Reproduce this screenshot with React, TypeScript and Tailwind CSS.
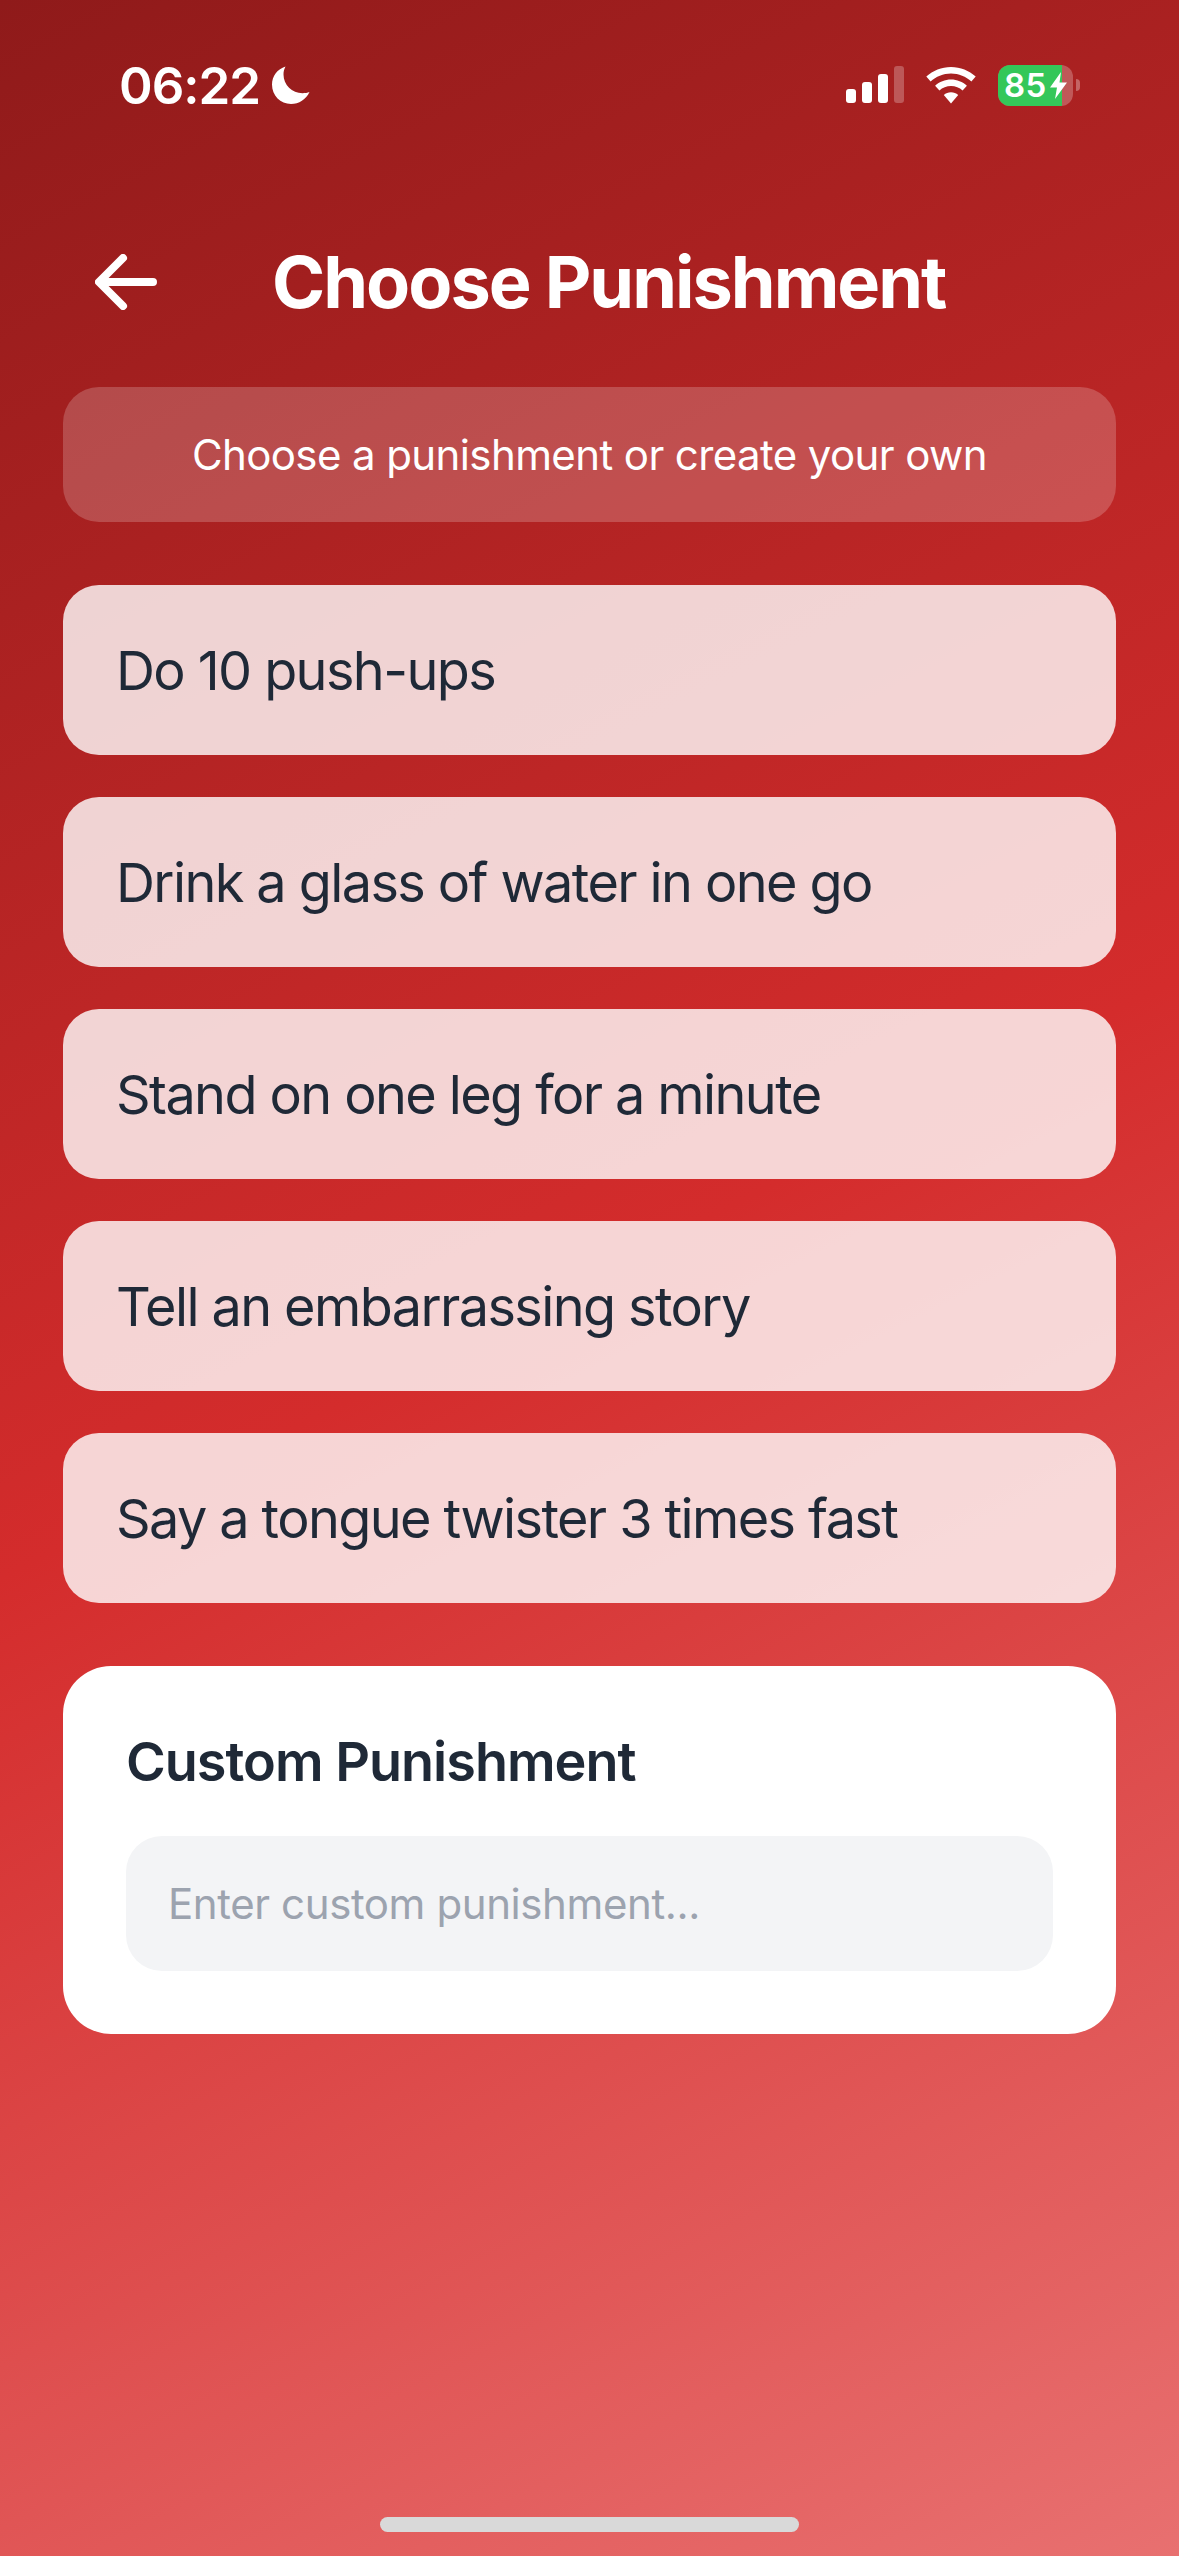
const FONT = "font-['Inter','Liberation_Sans',sans-serif]"

const punishments = [
  'Do 10 push-ups',
  'Drink a glass of water in one go',
  'Stand on one leg for a minute',
  'Tell an embarrassing story',
  'Say a tongue twister 3 times fast',
]

function MoonIcon() {
  return (
    <svg width="40" height="40" viewBox="0 0 40 40" fill="white">
      <path d="M14.5 1.5C6.5 4 1 11 1 19.5C1 30.5 9.5 39 20 39C28 39 35 34.5 38.5 27C36.5 27.8 34 28.2 31.5 28.2C21 28.2 12.5 20 12.5 9.5C12.5 6.5 13.2 4 14.5 1.5Z" />
    </svg>
  )
}

function SignalIcon() {
  return (
    <svg width="58" height="38" viewBox="0 0 58 38" fill="white">
      <rect x="0" y="23" width="10" height="14" rx="3" />
      <rect x="16" y="16" width="10" height="21" rx="3" />
      <rect x="32" y="8" width="10" height="29" rx="3" />
      <rect x="48" y="0" width="10" height="37" rx="3" fillOpacity="0.25" />
    </svg>
  )
}

function WifiIcon() {
  return (
    <svg width="50" height="37" viewBox="0 0 50 37" fill="white">
      <path d="M25 0C15.5 0 7 3.7 0.3 9.6L4.6 14.4C10 9.6 17.2 6.4 25 6.4C32.8 6.4 40 9.6 45.4 14.4L49.7 9.6C43 3.7 34.5 0 25 0Z" />
      <path d="M25 12.6C19 12.6 13.4 14.9 9.1 18.7L13.4 23.5C16.5 20.8 20.6 19.1 25 19.1C29.4 19.1 33.5 20.8 36.6 23.5L40.9 18.7C36.6 14.9 31 12.6 25 12.6Z" />
      <path d="M25 25.2C22.3 25.2 19.7 26.2 17.8 27.9L25 36.5L32.2 27.9C30.3 26.2 27.7 25.2 25 25.2Z" />
    </svg>
  )
}

function BatteryIcon() {
  return (
    <div className="flex items-center gap-[3px]">
      <div className="relative flex h-[41px] w-[75px] items-center overflow-hidden rounded-[12px] bg-white/25">
        <div className="absolute inset-y-0 left-0 w-[64px] bg-[#34c759]" />
        <span className="relative pl-[6px] text-[33px] font-semibold leading-none tracking-[0.5px] text-white">85</span>
        <svg className="absolute left-[52px] top-[7px]" width="17" height="27" viewBox="0 0 17 27" fill="white">
          <path d="M11 0L0 15.5H7L5 27L17 10.5H9.5L11 0Z" />
        </svg>
      </div>
      <div className="h-[12px] w-[4px] rounded-r-full bg-white/30" />
    </div>
  )
}

function StatusBar() {
  return (
    <div className="flex h-[60px] items-center justify-between pl-[56px] pr-[36px]">
      <div className="flex items-center gap-[11px]">
        <span className="text-[51px] font-semibold leading-none tracking-[-1px] text-white">06:22</span>
        <MoonIcon />
      </div>
      <div className="flex items-center gap-[22px]">
        <SignalIcon />
        <WifiIcon />
        <BatteryIcon />
      </div>
    </div>
  )
}

export default function App() {
  return (
    <div className={`${FONT} relative flex h-[2556px] w-[1179px] flex-col overflow-hidden bg-[linear-gradient(153deg,#8f1a1a_0%,#d42c2c_50%,#e87070_100%)] px-[63px] pt-[55px]`}>
      <StatusBar />

      <div className="mt-[122px] flex h-[90px] items-center">
        <svg className="ml-[32px]" width="62" height="56" viewBox="0 0 62 56" fill="none" stroke="white" strokeWidth="8" strokeLinecap="round" strokeLinejoin="round">
          <path d="M58 28H5M28 4L4 28L28 52" />
        </svg>
        <h1 className="ml-[115px] text-[72px] font-bold leading-none tracking-[-2px] text-white">Choose Punishment</h1>
      </div>

      <div className="mt-[60px] flex h-[135px] items-center justify-center rounded-[36px] bg-white/20">
        <p className="text-[42px] leading-none tracking-[-0.6px] text-white">Choose a punishment or create your own</p>
      </div>

      <div className="mt-[63px] flex flex-col gap-[42px]">
        {punishments.map((p) => (
          <div key={p} className="flex h-[170px] items-center rounded-[36px] bg-white/80 px-[53px]">
            <span className="pt-[2px] text-[54px] leading-none tracking-[-1.6px] text-[#1f2937]">{p}</span>
          </div>
        ))}
      </div>

      <div className="mt-[63px] h-[368px] rounded-[48px] bg-white px-[63px] pt-[69px]">
        <h2 className="text-[54px] font-semibold leading-none tracking-[-1px] text-[#1f2937]">Custom Punishment</h2>
        <div className="mt-[47px] flex h-[135px] items-center rounded-[36px] bg-[#f3f4f6] px-[42px]">
          <span className="text-[42px] leading-none tracking-[-0.4px] text-[#9ca3af]">Enter custom punishment...</span>
        </div>
      </div>

      <div className="absolute bottom-[24px] left-[380px] h-[15px] w-[419px] rounded-full bg-[#d9d9d9]" />
    </div>
  )
}
